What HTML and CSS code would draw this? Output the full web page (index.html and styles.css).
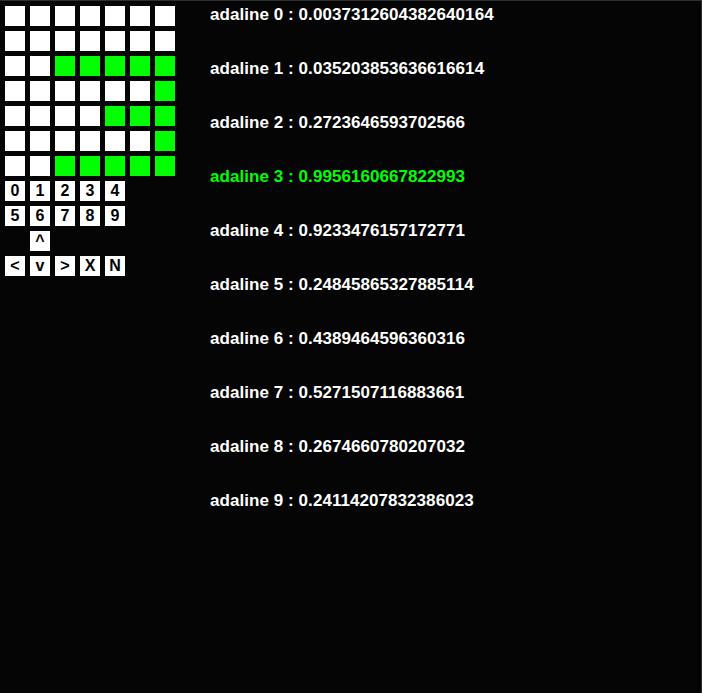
FILE: index.html
```html
<!DOCTYPE html>
<html>
<head>
<meta charset="utf-8">
<link rel="stylesheet" href="styles.css">
</head>
<body>
<div class="frame">
  <div class="left">
    <div class="grid">
      <div class="c"></div><div class="c"></div><div class="c"></div><div class="c"></div><div class="c"></div><div class="c"></div><div class="c"></div>
      <div class="c"></div><div class="c"></div><div class="c"></div><div class="c"></div><div class="c"></div><div class="c"></div><div class="c"></div>
      <div class="c"></div><div class="c"></div><div class="c on"></div><div class="c on"></div><div class="c on"></div><div class="c on"></div><div class="c on"></div>
      <div class="c"></div><div class="c"></div><div class="c"></div><div class="c"></div><div class="c"></div><div class="c"></div><div class="c on"></div>
      <div class="c"></div><div class="c"></div><div class="c"></div><div class="c"></div><div class="c on"></div><div class="c on"></div><div class="c on"></div>
      <div class="c"></div><div class="c"></div><div class="c"></div><div class="c"></div><div class="c"></div><div class="c"></div><div class="c on"></div>
      <div class="c"></div><div class="c"></div><div class="c on"></div><div class="c on"></div><div class="c on"></div><div class="c on"></div><div class="c on"></div>
    </div>
    <div class="btns">
      <div class="b">0</div><div class="b">1</div><div class="b">2</div><div class="b">3</div><div class="b">4</div>
      <div class="b">5</div><div class="b">6</div><div class="b">7</div><div class="b">8</div><div class="b">9</div>
      <div class="blank"></div><div class="b">^</div><div class="blank"></div><div class="blank"></div><div class="blank"></div>
      <div class="b">&lt;</div><div class="b">v</div><div class="b">&gt;</div><div class="b">X</div><div class="b">N</div>
    </div>
  </div>
  <div class="list">
    <div class="row">adaline 0 : 0.0037312604382640164</div>
    <div class="row">adaline 1 : 0.035203853636616614</div>
    <div class="row">adaline 2 : 0.2723646593702566</div>
    <div class="row best">adaline 3 : 0.9956160667822993</div>
    <div class="row">adaline 4 : 0.9233476157172771</div>
    <div class="row">adaline 5 : 0.24845865327885114</div>
    <div class="row">adaline 6 : 0.4389464596360316</div>
    <div class="row">adaline 7 : 0.5271507116883661</div>
    <div class="row">adaline 8 : 0.2674660780207032</div>
    <div class="row">adaline 9 : 0.24114207832386023</div>
  </div>
</div>
</body>
</html>
```
FILE: styles.css
```css
html, body {
  margin: 0;
  padding: 0;
  background: #050505;
}
.frame {
  box-sizing: border-box;
  width: 702px;
  height: 693px;
  border-top: 1px solid #2b2f30;
  border-right: 1px solid #2b2f30;
  display: flex;
  align-items: flex-start;
  font-family: "Liberation Sans", Arial, sans-serif;
  font-weight: bold;
}
.left {
  padding: 5px 0 0 5px;
  display: flex;
  flex-direction: column;
  gap: 5px;
}
.grid {
  display: grid;
  grid-template-columns: repeat(7, 20px);
  grid-auto-rows: 20px;
  gap: 5px;
}
.c { background: #ffffff; }
.c.on { background: #00ff00; }
.btns {
  display: grid;
  grid-template-columns: repeat(5, 20px);
  grid-auto-rows: 20px;
  gap: 5px;
}
.b {
  background: #ffffff;
  color: #000;
  font-size: 16px;
  line-height: 20px;
  text-align: center;
}
.list {
  margin-left: 35px;
  padding-top: 4px;
  display: flex;
  flex-direction: column;
  gap: 34px;
}
.row {
  color: #ffffff;
  font-size: 17px;
  line-height: 20px;
  letter-spacing: 0.06px;
  white-space: nowrap;
}
.row.best { color: #00ff00; }
```
